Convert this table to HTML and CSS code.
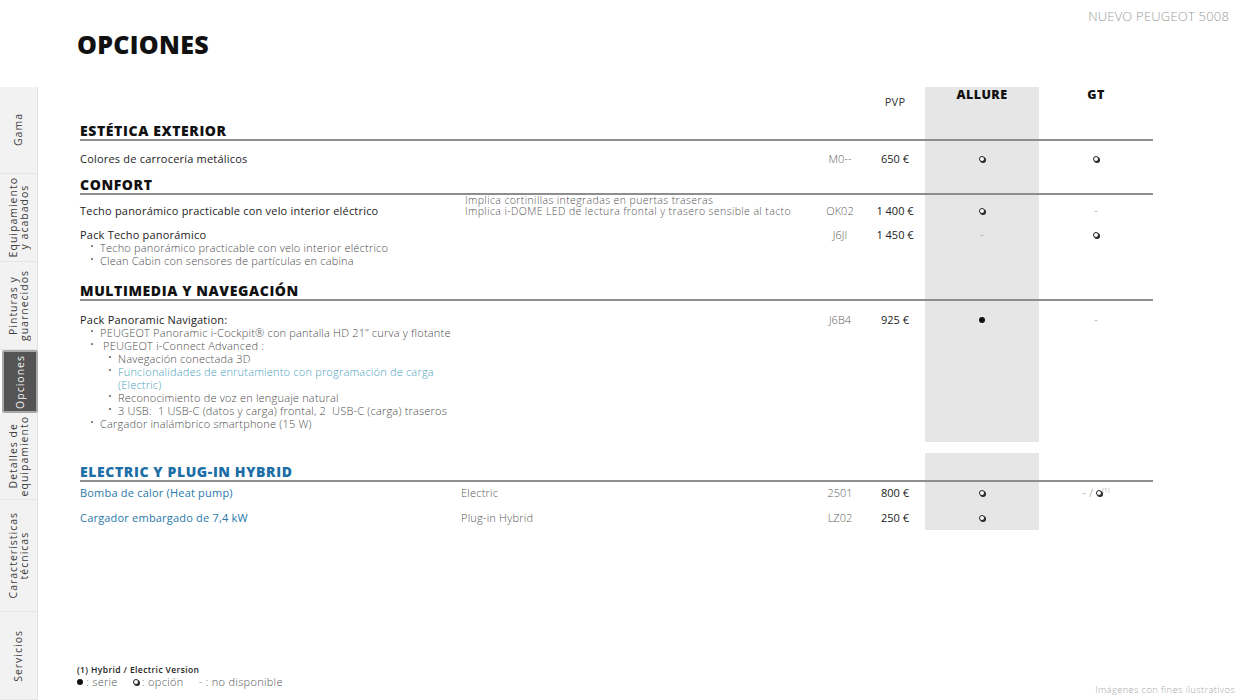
FILE: index.html
```html
<!DOCTYPE html>
<html lang="es">
<head>
<meta charset="utf-8">
<title>Opciones - Nuevo Peugeot 5008</title>
<link rel="stylesheet" href="styles.css">
</head>
<body>
<div class="page">
  <nav class="sidebar">
    <div class="tab t-gama"><span>Gama</span></div>
    <div class="tab t-equip"><span>Equipamiento<br>y acabados</span></div>
    <div class="tab t-pint"><span>Pinturas y<br>guarnecidos</span></div>
    <div class="tab t-opc active"><span>Opciones</span></div>
    <div class="tab t-det"><span>Detalles de<br>equipamiento</span></div>
    <div class="tab t-car"><span>Características<br>técnicas</span></div>
    <div class="tab t-serv"><span>Servicios</span></div>
  </nav>

  <main class="main">
    <div class="brand">NUEVO PEUGEOT 5008</div>
    <h1 class="title">OPCIONES</h1>

    <div class="table">
      <div class="row head-row">
        <div class="c-span3"></div>
        <div class="c-price pvp">PVP</div>
        <div class="c-allure trim">ALLURE</div>
        <div class="c-gt trim">GT</div>
      </div>

      <div class="row sec">
        <div class="c-h">ESTÉTICA EXTERIOR</div>
        <div class="c-allure"></div>
        <div class="c-gt"></div>
      </div>
      <div class="row r-colores">
        <div class="c-desc">Colores de carrocería metálicos</div>
        <div class="c-note"></div>
        <div class="c-code">M0--</div>
        <div class="c-price">650 €</div>
        <div class="c-allure"><span class="opt"></span></div>
        <div class="c-gt"><span class="opt"></span></div>
      </div>

      <div class="row sec">
        <div class="c-h">CONFORT</div>
        <div class="c-allure"></div>
        <div class="c-gt"></div>
      </div>
      <div class="row r-techo">
        <div class="c-desc">Techo panorámico practicable con velo interior eléctrico</div>
        <div class="c-note notes"><div>Implica cortinillas integradas en puertas traseras</div><div>Implica i-DOME LED de lectura frontal y trasero sensible al tacto</div></div>
        <div class="c-code">OK02</div>
        <div class="c-price">1 400 €</div>
        <div class="c-allure"><span class="opt"></span></div>
        <div class="c-gt dash">-</div>
      </div>
      <div class="row r-pack">
        <div class="c-desc">Pack Techo panorámico
          <ul class="bul">
            <li>Techo panorámico practicable con velo interior eléctrico</li>
            <li>Clean Cabin con sensores de partículas en cabina</li>
          </ul>
        </div>
        <div class="c-note"></div>
        <div class="c-code">J6JI</div>
        <div class="c-price">1 450 €</div>
        <div class="c-allure dash">-</div>
        <div class="c-gt"><span class="opt"></span></div>
      </div>

      <div class="row sec">
        <div class="c-h">MULTIMEDIA Y NAVEGACIÓN</div>
        <div class="c-allure"></div>
        <div class="c-gt"></div>
      </div>
      <div class="row r-nav">
        <div class="c-desc">Pack Panoramic Navigation:
          <ul class="bul">
            <li>PEUGEOT Panoramic i-Cockpit® con pantalla HD 21’’ curva y flotante</li>
            <li>&nbsp;PEUGEOT i-Connect Advanced :
              <ul class="bul sub">
                <li>Navegación conectada 3D</li>
                <li class="teal">Funcionalidades de enrutamiento con programación de carga (Electric)</li>
                <li>Reconocimiento de voz en lenguaje natural</li>
                <li>3 USB:&nbsp; 1 USB-C (datos y carga) frontal, 2&nbsp; USB-C (carga) traseros</li>
              </ul>
            </li>
            <li>Cargador inalámbrico smartphone (15 W)</li>
          </ul>
        </div>
        <div class="c-note"></div>
        <div class="c-code">J6B4</div>
        <div class="c-price">925 €</div>
        <div class="c-allure"><span class="ser"></span></div>
        <div class="c-gt dash">-</div>
      </div>

      <div class="gap"></div>

      <div class="row sec sec-el">
        <div class="c-h blue">ELECTRIC Y PLUG-IN HYBRID</div>
        <div class="c-allure"></div>
        <div class="c-gt"></div>
      </div>
      <div class="row r-el1">
        <div class="c-desc blue2">Bomba de calor (Heat pump)</div>
        <div class="c-note">Electric</div>
        <div class="c-code">2501</div>
        <div class="c-price">800 €</div>
        <div class="c-allure"><span class="opt"></span></div>
        <div class="c-gt dash">- / <span class="opt"></span><sup class="ref">(1)</sup></div>
      </div>
      <div class="row r-el2">
        <div class="c-desc blue2">Cargador embargado de 7,4 kW</div>
        <div class="c-note">Plug-in Hybrid</div>
        <div class="c-code">LZ02</div>
        <div class="c-price">250 €</div>
        <div class="c-allure"><span class="opt"></span></div>
        <div class="c-gt"></div>
      </div>
    </div>

    <footer class="footer">
      <div class="legend-block">
        <div class="fnote">(1) Hybrid / Electric Version</div>
        <div class="legend"><span class="ser"></span> : serie <span class="sp"></span><span class="opt"></span> : opción <span class="sp"></span><span class="dash">-</span> : no disponible</div>
      </div>
      <div class="credits">Imágenes con fines ilustrativos</div>
    </footer>
  </main>
</div>
</body>
</html>
```

FILE: styles.css
```css
* { box-sizing: border-box; }

html, body {
  margin: 0;
  padding: 0;
  background: #fff;
}

body {
  font-family: "Open Sans", "Liberation Sans", sans-serif;
  color: #1d1d1d;
  width: 1244px;
  height: 700px;
  overflow: hidden;
}

.page {
  display: flex;
  height: 700px;
}

/* ---------- sidebar ---------- */
.sidebar {
  width: 38px;
  flex: none;
  display: flex;
  flex-direction: column;
  padding-top: 87px;
}

.tab {
  background: #f2f2f2;
  border-right: 1px solid #e2e2e2;
  border-bottom: 1px solid #e6e6e6;
  display: flex;
  align-items: center;
  justify-content: center;
  color: #3c3c3c;
  font-size: 10.5px;
  letter-spacing: 1px;
  line-height: 11px;
}

.tab span {
  writing-mode: vertical-rl;
  transform: rotate(180deg);
  text-align: center;
  white-space: nowrap;
}

.t-gama { height: 87px; }
.t-equip { height: 88px; }
.t-pint { height: 88px; }
.t-opc { height: 63px; }
.t-det { height: 87px; }
.t-car { height: 112px; }
.t-serv { flex: 1; }

.tab.active {
  background: #545454;
  color: #f0f0f0;
  margin-left: 2px;
  border: 2px solid #a9a9a9;
  border-radius: 2px;
}

/* ---------- main ---------- */
.main {
  flex: 1;
  display: flex;
  flex-direction: column;
  min-width: 0;
}

.brand {
  padding-top: 8px;
  padding-right: 15px;
  text-align: right;
  font-size: 13px;
  line-height: 16px;
  color: #9a9a9a;
  font-weight: 300;
  letter-spacing: 0.2px;
}

.title {
  margin: 6px 0 0 39px;
  font-size: 25px;
  line-height: 28px;
  font-weight: 800;
  letter-spacing: 0.3px;
  color: #111;
}

/* ---------- table ---------- */
.table {
  margin: 29px 0 0 42px;
  width: 1073px;
}

.row {
  display: grid;
  grid-template-columns: 381px 354px 50px 60px 114px 114px;
  font-size: 11px;
  line-height: 13px;
  letter-spacing: 0.2px;
}

.c-allure { background: #e6e6e6; text-align: center; }
.c-gt { text-align: center; }
.c-code { text-align: center; color: #5e5e5e; font-weight: 300; letter-spacing: 0; }
.c-price { text-align: center; color: #222; letter-spacing: 0; }
.c-span3 { grid-column: 1 / 4; }
.c-note { color: #555; font-weight: 300; }

.head-row { height: 32px; }
.head-row .pvp { padding-top: 8px; font-size: 11px; color: #333; letter-spacing: 0.3px; }
.head-row .trim {
  font-size: 12.5px;
  font-weight: 800;
  padding-top: 1px;
  line-height: 14px;
  letter-spacing: 0.4px;
  color: #111;
}

.sec {
  border-bottom: 2px solid #8e8e8e;
}
.sec .c-h {
  grid-column: 1 / 5;
  font-size: 14px;
  font-weight: 800;
  line-height: 16px;
  padding-top: 4px;
  letter-spacing: 0.6px;
  color: #111;
}
.sec-el .c-h { padding-top: 11px; }

.blue { color: #1c6ea6 !important; }
.blue2 { color: #2a78a8; }
.teal { color: #4b9fbd; }

.r-colores > div { padding-top: 11px; padding-bottom: 8px; }
.r-techo > div { padding-top: 9px; }
.r-techo .notes {
  padding-top: 0;
  padding-left: 4px;
  font-size: 10.5px;
  line-height: 10.5px;
  letter-spacing: 0.4px;
}
.r-techo .notes div { height: 11px; overflow: visible; }
.r-pack > div { padding-top: 11px; padding-bottom: 12px; }
.r-nav > div { padding-top: 12px; padding-bottom: 12px; }
.r-el1 > div { padding-top: 4px; padding-bottom: 6px; }
.r-el2 > div { padding-top: 6px; padding-bottom: 6px; }

.gap { height: 11px; }

.bul {
  list-style: none;
  margin: 0;
  padding: 0 0 0 20px;
  color: #4d4d4d;
  font-weight: 300;
}
.bul.sub { padding-left: 18px; }
.bul li { position: relative; }
.bul li::before {
  content: "•";
  position: absolute;
  left: -10px;
  top: -1px;
  font-size: 10px;
  color: #333;
}

.dash { color: #888; font-weight: 300; }

.opt {
  display: inline-block;
  width: 6px;
  height: 6px;
  border: 1px solid #222;
  border-radius: 50%;
  box-shadow: 1px 1px 0 #222;
  vertical-align: middle;
  margin-top: -2px;
  background: #fff;
}

.ser {
  display: inline-block;
  width: 6px;
  height: 6px;
  border-radius: 50%;
  background: #111;
  vertical-align: middle;
  margin-top: -2px;
}

.ref {
  font-size: 6px;
  vertical-align: top;
  line-height: 8px;
  color: #666;
}

/* ---------- footer ---------- */
.footer {
  margin-top: auto;
  display: flex;
  justify-content: space-between;
  align-items: flex-end;
  padding: 0 9px 4px 39px;
}

.legend-block { margin-bottom: 8px; }

.fnote {
  font-size: 8.5px;
  line-height: 11px;
  font-weight: 600;
  letter-spacing: 0.4px;
  color: #222;
}

.legend {
  font-size: 11px;
  line-height: 13px;
  color: #555;
  font-weight: 300;
  letter-spacing: 0.3px;
}
.legend .sp { display: inline-block; width: 12px; }

.credits {
  font-size: 9.5px;
  line-height: 12px;
  color: #a8a8a8;
  font-weight: 300;
  letter-spacing: 0.3px;
}
```
